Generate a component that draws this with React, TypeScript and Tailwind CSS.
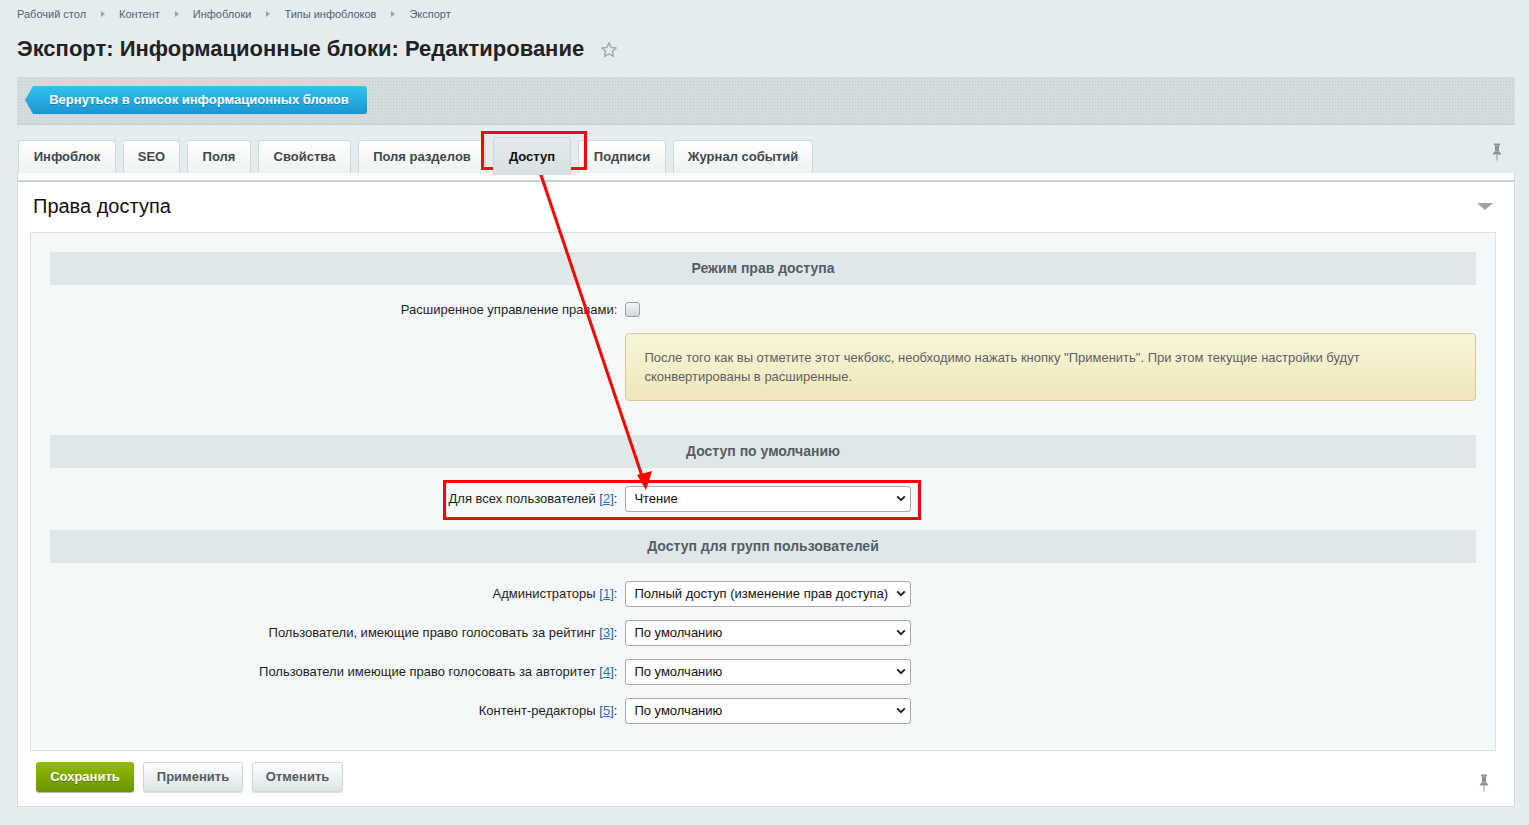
import React from "react";

const crumbs = ["Рабочий стол", "Контент", "Инфоблоки", "Типы инфоблоков", "Экспорт"];

const tabs = [
  { label: "Инфоблок", w: "w-[98px]" },
  { label: "SEO", w: "w-[57px]" },
  { label: "Поля", w: "w-[64px]" },
  { label: "Свойства", w: "w-[93px]" },
  { label: "Поля разделов", w: "w-[128px]" },
  { label: "Доступ", w: "w-[78px]", active: true },
  { label: "Подписи", w: "w-[88px]" },
  { label: "Журнал событий", w: "w-[140px]" },
];

const groups = [
  { label: "Администраторы", n: "1", value: "Полный доступ (изменение прав доступа)" },
  { label: "Пользователи, имеющие право голосовать за рейтинг", n: "3", value: "По умолчанию" },
  { label: "Пользователи имеющие право голосовать за авторитет", n: "4", value: "По умолчанию" },
  { label: "Контент-редакторы", n: "5", value: "По умолчанию" },
];

function Pin({ className }: { className?: string }) {
  return (
    <svg className={className} width="12" height="18" viewBox="0 0 12 18" fill="none">
      <rect x="3" y="0.5" width="6" height="2" fill="#8a9398" />
      <rect x="4" y="2.5" width="4" height="6" fill="#8a9398" />
      <path d="M1.5 11.5 L3.5 8.5 H8.5 L10.5 11.5 Z" fill="#8a9398" />
      <rect x="5.5" y="11.5" width="1" height="6" fill="#8a9398" />
    </svg>
  );
}

function Chevron() {
  return (
    <svg width="10" height="7" viewBox="0 0 10 7" fill="none">
      <path d="M1.2 1.4 L5 5.2 L8.8 1.4" stroke="#222" strokeWidth="2" />
    </svg>
  );
}

function Select({ value }: { value: string }) {
  return (
    <div className="flex h-[26px] w-[286px] items-center justify-between rounded-[3px] border border-[#a8a8a8] bg-white pl-[8px] pr-[4px] text-[13px] text-[#111]">
      <span className="truncate">{value}</span>
      <Chevron />
    </div>
  );
}

function Header({ children }: { children: React.ReactNode }) {
  return (
    <div className="flex h-[33px] items-center justify-center bg-[#e0e7e9] text-[14px] font-bold text-[#535e64]">
      {children}
    </div>
  );
}

function Row({ label, n, children }: { label: string; n?: string; children: React.ReactNode }) {
  return (
    <div className="flex items-center">
      <div className="w-[40%] pr-[3px] text-right text-[13px] text-[#1e1e1e]">
        {label}
        {n && (
          <>
            {" "}
            <span className="text-[#2a5c9a]">
              [<span className="underline text-[#2f6fc2]">{n}</span>]
            </span>
          </>
        )}
        :
      </div>
      <div className="pl-[5px]">{children}</div>
    </div>
  );
}

export default function App() {
  return (
    <div
      className="relative min-h-[825px] bg-[#e5ecee] pl-[17px] pr-[14px] text-[#333]"
      style={{ fontFamily: '"Liberation Sans", Arial, sans-serif' }}
    >
      {/* breadcrumbs */}
      <div className="flex items-center pt-[8px] text-[11px] leading-[12px] text-[#55607a]">
        {crumbs.map((c, i) => (
          <React.Fragment key={c}>
            {i > 0 && (
              <span className="ml-[15px] mr-[14px] inline-block h-0 w-0 border-y-[3.5px] border-l-[4px] border-y-transparent border-l-[#9aa2a8]" />
            )}
            <span>{c}</span>
          </React.Fragment>
        ))}
      </div>

      {/* title */}
      <div className="mt-[17px] flex items-center">
        <h1 className="text-[22px] font-bold leading-[24px] text-[#222]">
          Экспорт: Информационные блоки: Редактирование
        </h1>
        <svg className="ml-[16px] mt-[2px]" width="18" height="18" viewBox="0 0 24 24" fill="none">
          <path
            d="M12 2.5l2.9 6.2 6.6.7-5 4.5 1.4 6.6L12 17.2l-5.9 3.3 1.4-6.6-5-4.5 6.6-.7z"
            stroke="#a2abb0"
            strokeWidth="2"
            strokeLinejoin="round"
          />
        </svg>
      </div>

      {/* toolbar */}
      <div className="mt-[16px] h-[48px] border-b border-[#c6cfd2] bg-[#d5dcdf] bg-[radial-gradient(#c4ccd0_0.8px,transparent_0.8px)] bg-[length:3px_3px] pl-[8px] pt-[9px]">
        <div className="flex h-[28px] w-[342px] items-center justify-center rounded-r-[3px] bg-gradient-to-b from-[#33c3ee] to-[#1c95d1] pl-[6px] text-[13px] font-bold text-white shadow-[0_1px_1px_rgba(0,0,0,0.25)] [clip-path:polygon(8px_0,100%_0,100%_100%,8px_100%,0_50%)] [text-shadow:0_1px_0_rgba(0,0,0,0.25)]">
          Вернуться в список информационных блоков
        </div>
      </div>

      {/* tabs */}
      <div className="relative mt-[12px] flex items-end gap-[7px] pl-px">
        {tabs.map((t) =>
          t.active ? (
            <div
              key={t.label}
              className={`relative z-10 -mb-[2px] flex h-[38px] items-center justify-center rounded-t-[4px] border border-b-0 border-[#cfd6d9] bg-gradient-to-b from-[#e4eaeb] to-[#d9e0e2] text-[13px] font-bold text-[#111] ${t.w}`}
            >
              {t.label}
            </div>
          ) : (
            <div
              key={t.label}
              className={`flex h-[33px] items-center justify-center rounded-t-[4px] border border-b-0 border-[#d1d8da] bg-gradient-to-b from-[#ffffff] to-[#eef2f3] text-[13px] font-bold text-[#3f474c] ${t.w}`}
            >
              {t.label}
            </div>
          )
        )}
        <Pin className="absolute right-[12px] top-[6px]" />
      </div>

      {/* main panel */}
      <div className="border-x border-b border-[#d3dadc] bg-white">
        <div className="h-[7px] bg-[#fafbfb]" />
        <div className="h-[2px] bg-[#c9d1d4]" />
        <div className="flex h-[50px] items-center justify-between pb-[2px] pl-[15px] pr-[21px]">
          <span className="text-[20px] text-[#111]">Права доступа</span>
          <span className="inline-block h-0 w-0 border-x-[8px] border-t-[7px] border-x-transparent border-t-[#9aa3a8]" />
        </div>

        <div className="ml-[12px] mr-[18px] border border-[#dbe3e5] bg-[#f5f8f9] pb-[26px] pl-[19px] pr-[19px] pt-[19px]">
          <Header>Режим прав доступа</Header>
          <div className="mt-[15px]">
            <Row label="Расширенное управление правами">
              <div className="h-[15px] w-[15px] rounded-[3px] border border-[#9aa2a6] bg-gradient-to-b from-[#f4f5f5] to-[#d2d6d8]" />
            </Row>
          </div>
          <div className="mt-[13px] flex">
            <div className="w-[40%]" />
            <div className="flex-1 pl-[5px]">
              <div className="h-[68px] rounded-[4px] border border-[#d6c994] bg-gradient-to-b from-[#f8f5da] to-[#f0e7b9] pl-[18px] pt-[14px] text-[13px] leading-[19px] text-[#5f6165]">
                После того как вы отметите этот чекбокс, необходимо нажать кнопку "Применить". При этом текущие настройки будут
                <br />
                сконвертированы в расширенные.
              </div>
            </div>
          </div>

          <div className="mt-[34px]">
            <Header>Доступ по умолчанию</Header>
          </div>
          <div className="mt-[18px]">
            <Row label="Для всех пользователей" n="2">
              <Select value="Чтение" />
            </Row>
          </div>

          <div className="mt-[18px]">
            <Header>Доступ для групп пользователей</Header>
          </div>
          <div className="mt-[18px] flex flex-col gap-[13px]">
            {groups.map((g) => (
              <Row key={g.n} label={g.label} n={g.n}>
                <Select value={g.value} />
              </Row>
            ))}
          </div>
        </div>

        {/* buttons */}
        <div className="relative flex gap-[9px] pb-[14px] pl-[18px] pt-[11px]">
          <div className="flex h-[30px] w-[98px] items-center justify-center rounded-[3px] bg-gradient-to-b from-[#92bb03] to-[#6a9500] text-[13px] font-bold text-white shadow-[0_1px_1px_rgba(0,0,0,0.3)] [text-shadow:0_1px_0_rgba(0,0,0,0.3)]">
            Сохранить
          </div>
          <div className="flex h-[30px] w-[100px] items-center justify-center rounded-[3px] border border-[#d0d7da] bg-gradient-to-b from-[#ffffff] to-[#dde4e7] text-[13px] font-bold text-[#545c61] shadow-[0_1px_1px_rgba(0,0,0,0.15)]">
            Применить
          </div>
          <div className="flex h-[30px] w-[91px] items-center justify-center rounded-[3px] border border-[#d0d7da] bg-gradient-to-b from-[#ffffff] to-[#dde4e7] text-[13px] font-bold text-[#545c61] shadow-[0_1px_1px_rgba(0,0,0,0.15)]">
            Отменить
          </div>
          <Pin className="absolute right-[24px] top-[23px]" />
        </div>
      </div>

      {/* red annotations */}
      <div className="pointer-events-none absolute left-[481px] top-[131px] h-[39px] w-[106px] border-[3px] border-[#f00]" />
      <div className="pointer-events-none absolute left-[443px] top-[480px] h-[40px] w-[478px] border-[3px] border-[#f00]" />
      <svg className="pointer-events-none absolute left-0 top-0" width="1529" height="825">
        <line x1="539" y1="169" x2="644" y2="482" stroke="#f00" strokeWidth="3" />
        <path d="M646 490 L637 475 L652 471 Z" fill="#f00" />
      </svg>
    </div>
  );
}
